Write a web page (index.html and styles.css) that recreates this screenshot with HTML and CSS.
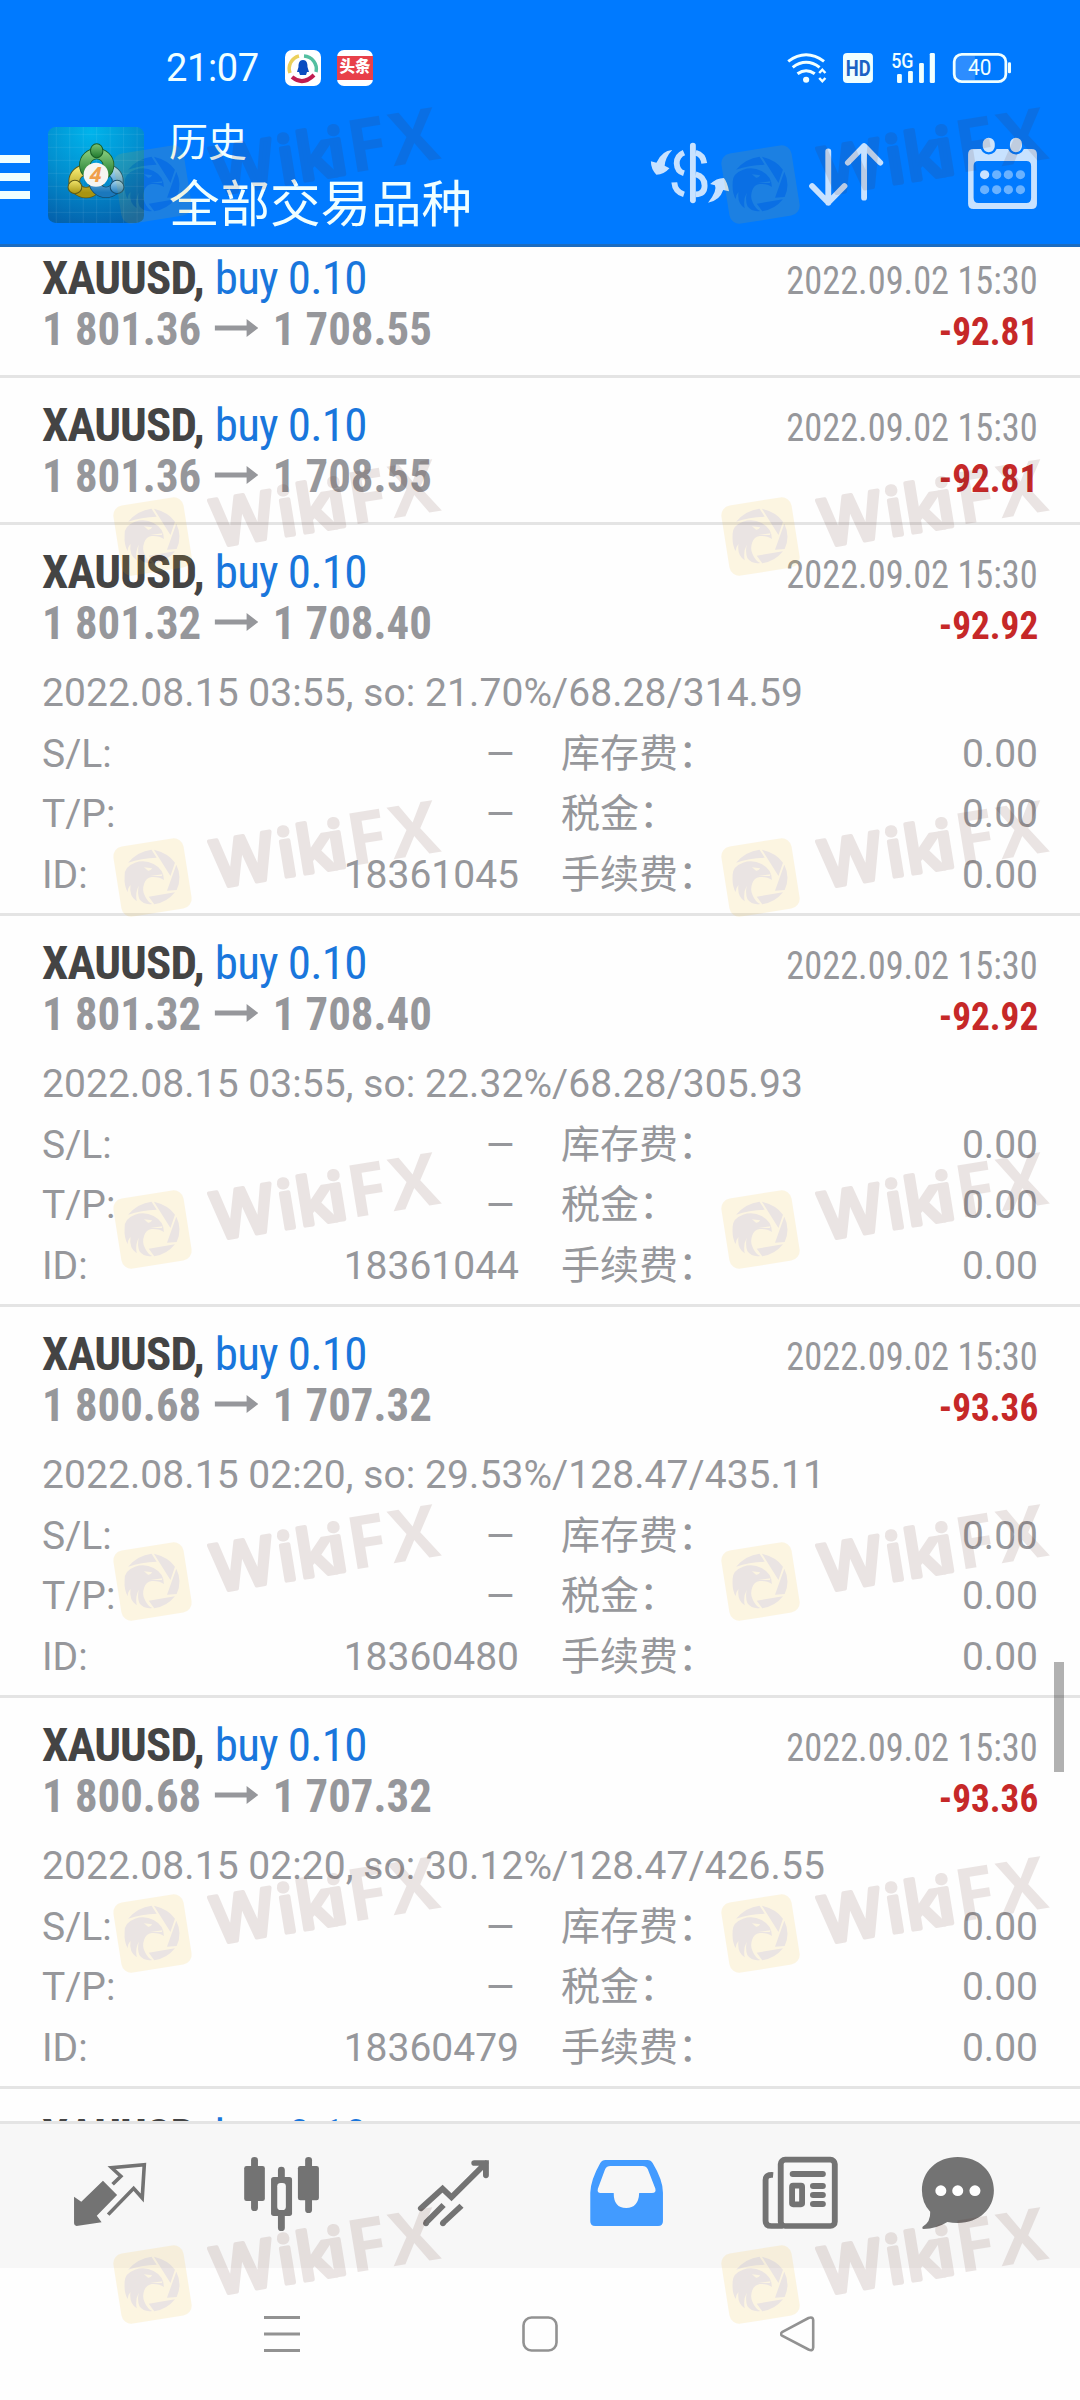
FILE: index.html
```html
<!DOCTYPE html>
<html lang="zh-CN">
<head>
<meta charset="utf-8">
<title>历史</title>
<link rel="stylesheet" href="styles.css">
</head>
<body>
<svg class="defs" width="0" height="0">
  <symbol id="mark" viewBox="0 0 350 125">
    <rect x="13" y="45" width="71" height="71" rx="10" fill="#f0b20f" transform="rotate(-9 48.5 80.5)"/>
    <g transform="matrix(.34435 0 0 .33333 -104 -157)" fill="#572319">
      <path d="M372 668Q400 634 440 629L455 653Q410 655 372 668ZM447 629Q490 640 508 668L495 708ZM512 674Q530 712 513 750L485 752ZM508 757Q485 787 448 793L432 770Z"/>
      <path d="M362 708Q360 680 392 668Q420 658 446 672Q476 688 476 720Q462 709 440 711Q424 714 419 730Q412 750 420 766Q428 786 442 792Q418 796 405 778Q398 760 403 737Q392 757 397 784Q374 768 379 735Q370 745 371 757Q360 738 362 708Z"/>
      <path d="M418 682L442 685Q438 693 430 692ZM436 708L472 703L470 708Z" fill="#f0b20f"/>
    </g>
    <g transform="translate(112 91) rotate(-9.2)" fill="#572319" stroke="#572319" stroke-linejoin="round">
      <text class="mark-round" stroke-width="4" x="0 66 85 117">Wiki</text>
      <text class="mark-flat" stroke-width="0" x="137 180">FX</text>
    </g>
  </symbol>
  <symbol id="arrow" viewBox="0 0 43 18" preserveAspectRatio="none"><path d="M0 6.4H31.5V0L43 9L31.5 18V11.6H0Z" fill="currentColor"/></symbol>
</svg>

<header class="header">
  <div class="status">
    <span class="time">21:07</span>
    <svg class="app-dot" viewBox="0 0 36 36"><rect width="36" height="36" rx="7" fill="#fff"/><path d="M5 23A13 13 0 0 1 14 6" fill="none" stroke="#ecd05a" stroke-width="3.5"/><path d="M19 6A13 13 0 0 1 31 22" fill="none" stroke="#54bfa0" stroke-width="3.5"/><path d="M7 27Q18 36 29 25" fill="none" stroke="#c01d50" stroke-width="4"/><path d="M18 10C13.500 10 13.500 15 13.500 17L12 22L14 22L15 25H21L22 22L24 22L22.500 17C22.500 15 22.500 10 18 10Z" fill="#0b4cc0"/></svg>
    <span class="toutiao"><b>头条</b></span>
    <svg class="radio" viewBox="700 -90 697 288" preserveAspectRatio="none">
      <g fill="none" stroke="#f0ffff" stroke-width="9"><path d="M721 94Q773 55 825 94M734 112Q773 82 812 112M748 131Q773 113 798 131"/></g>
      <circle cx="773" cy="149" r="9" fill="#f0ffff"/>
      <path d="M811 129L820 119L829 129M811 144L820 154L829 144" fill="none" stroke="#f0ffff" stroke-width="7"/>
      <rect x="880" y="69" width="87" height="90" rx="12" fill="#f0ffff"/>
      <text x="888" y="137" class="hd" textLength="72" lengthAdjust="spacingAndGlyphs">HD</text>
      <text x="1020" y="113" class="fiveg" textLength="65" lengthAdjust="spacingAndGlyphs">5G</text>
      <g fill="#f0ffff"><rect x="1037" y="132" width="14" height="27" rx="4"/><rect x="1069" y="123" width="14" height="36" rx="4"/><rect x="1101" y="99" width="14" height="60" rx="4"/><rect x="1132" y="69" width="15" height="90" rx="4"/><rect x="1359" y="97" width="9" height="33" rx="4"/></g>
      <path d="M1225 77H1263V151H1225Q1204 151 1204 128V100Q1204 77 1225 77Z" fill="#2d8dff"/>
      <rect x="1203" y="73" width="150" height="82" rx="22" fill="none" stroke="#f0ffff" stroke-width="8"/>
      <text x="1243" y="136" class="pct" textLength="68" lengthAdjust="spacingAndGlyphs">40</text>
    </svg>
  </div>
  <div class="toolbar">
    <div class="burger"><i></i><i></i><i></i></div>
    <svg class="logo" viewBox="139 291 278 288" preserveAspectRatio="none">
      <defs>
        <radialGradient id="bg" cx=".45" cy=".05" r="1"><stop offset="0" stop-color="#00b4ec"/><stop offset=".5" stop-color="#0290d0"/><stop offset="1" stop-color="#0462ac"/></radialGradient>
        <linearGradient id="gr" x2="0" y2="1"><stop offset="0" stop-color="#7cc576"/><stop offset="1" stop-color="#207a2e"/></linearGradient>
        <linearGradient id="ye" x2="0" y2="1"><stop offset="0" stop-color="#f0e36a"/><stop offset="1" stop-color="#a89410"/></linearGradient>
        <linearGradient id="bl" x2="0" y2="1"><stop offset="0" stop-color="#a4d6f0"/><stop offset="1" stop-color="#1b78bc"/></linearGradient>
      </defs>
      <rect x="139" y="291" width="278" height="288" rx="22" fill="url(#bg)"/>
      <path d="M139 313H417M139 352H417M139 391H417M139 430H417M139 469H417M139 508H417M139 547H417M163 291V579M202 291V579M241 291V579M280 291V579M319 291V579M358 291V579M397 291V579" stroke="#fff" stroke-opacity=".12" fill="none" stroke-width="2"/>
      <g fill="none" stroke-width="29"><circle cx="249" cy="454" r="34" stroke="#5c5a18" stroke-width="34"/><circle cx="249" cy="454" r="34" stroke="url(#ye)"/><circle cx="307" cy="453" r="34" stroke="#134e72" stroke-width="34"/><circle cx="307" cy="453" r="34" stroke="url(#bl)"/><circle cx="280" cy="405" r="34" stroke="#185d24" stroke-width="34"/><circle cx="280" cy="405" r="34" stroke="url(#gr)"/></g>
      <ellipse cx="280" cy="362" rx="18" ry="21" fill="url(#gr)" stroke="#185d24" stroke-width="3"/><circle cx="217" cy="471" r="20" fill="url(#ye)" stroke="#5c5a18" stroke-width="3"/><circle cx="339" cy="471" r="20" fill="url(#bl)" stroke="#134e72" stroke-width="3"/>
      <circle cx="278" cy="434" r="36" fill="#f6f5f2"/>
      <text x="260" y="456" class="four">4</text>
    </svg>
    <div class="titles"><div class="small">历史</div><div class="big">全部交易品种</div></div>
    <svg class="action" viewBox="290.400 198 290.400 444" preserveAspectRatio="none">
      <g fill="none" stroke="#c8e2ff" stroke-width="17"><path d="M444 347V511" stroke-linecap="round"/><path d="M452 368Q474 374 477 400M452 433Q478 440 478 467Q478 492 452 493"/><path d="M418 368Q397 377 397 400Q398 424 418 430M390 457Q392 485 418 493"/></g>
      <path d="M384 360Q354 362 338 398L322 394Q322 418 338 434Q360 434 376 415L362 407Q364 382 384 360ZM488 518Q516 482 508 466L494 462Q512 444 534 444Q544 456 549 484L532 480Q522 512 488 518Z" fill="#c8e2ff"/>
    </svg>
    <svg class="action gap-a" viewBox="740.400 198 290.400 444" preserveAspectRatio="none"><path d="M837 364V518M790 468L837 518L884 468M941 503V348M894 398L941 348L988 398" fill="none" stroke="#c8e2ff" stroke-width="17" stroke-linecap="round" stroke-linejoin="round"/></svg>
    <svg class="action gap-b" viewBox="1205 198 290.400 444" preserveAspectRatio="none">
      <path fill-rule="evenodd" d="M1259 357H1427Q1443 357 1443 373V521Q1443 537 1427 537H1259Q1243 537 1243 521V373Q1243 357 1259 357ZM1273 393Q1259 393 1259 408V503Q1259 519 1273 519H1412Q1426 519 1426 503V408Q1426 393 1412 393Z" fill="#c8e2ff"/>
      <g fill="#cfe4fa" stroke="#007aff" stroke-width="7"><rect x="1282" y="320" width="42" height="50" rx="21"/><rect x="1361" y="320" width="42" height="50" rx="21"/></g>
      <g fill="#6ab2ff"><circle cx="1291" cy="434" r="13.500" fill="#c8e2ff"/><circle cx="1326" cy="434" r="13.500"/><circle cx="1360" cy="434" r="13.500"/><circle cx="1395" cy="434" r="13.500"/><circle cx="1291" cy="479" r="13.500"/><circle cx="1326" cy="479" r="13.500"/><circle cx="1360" cy="479" r="13.500"/><circle cx="1395" cy="479" r="13.500"/></g>
    </svg>
  </div>
</header>

<main class="list">
  <section class="deal first">
    <div class="row"><div class="name"><b>XAUUSD,</b> <span>buy 0.10</span></div><div class="date">2022.09.02 15:30</div></div>
    <div class="row"><div class="price">1 801.36<svg class="arr"><use href="#arrow"/></svg>1 708.55</div><div class="profit">-92.81</div></div>
  </section>
  <section class="deal">
    <div class="row"><div class="name"><b>XAUUSD,</b> <span>buy 0.10</span></div><div class="date">2022.09.02 15:30</div></div>
    <div class="row"><div class="price">1 801.36<svg class="arr"><use href="#arrow"/></svg>1 708.55</div><div class="profit">-92.81</div></div>
  </section>
  <section class="deal open">
    <div class="row"><div class="name"><b>XAUUSD,</b> <span>buy 0.10</span></div><div class="date">2022.09.02 15:30</div></div>
    <div class="row"><div class="price">1 801.32<svg class="arr"><use href="#arrow"/></svg>1 708.40</div><div class="profit">-92.92</div></div>
    <div class="note">2022.08.15 03:55, so: 21.70%/68.28/314.59</div>
    <div class="facts">
      <div><span>S/L:</span><span class="dash">–</span></div><div><span>库存费：</span><span>0.00</span></div>
      <div><span>T/P:</span><span class="dash">–</span></div><div><span>税金：</span><span>0.00</span></div>
      <div><span>ID:</span><span>18361045</span></div><div><span>手续费：</span><span>0.00</span></div>
    </div>
  </section>
  <section class="deal open">
    <div class="row"><div class="name"><b>XAUUSD,</b> <span>buy 0.10</span></div><div class="date">2022.09.02 15:30</div></div>
    <div class="row"><div class="price">1 801.32<svg class="arr"><use href="#arrow"/></svg>1 708.40</div><div class="profit">-92.92</div></div>
    <div class="note">2022.08.15 03:55, so: 22.32%/68.28/305.93</div>
    <div class="facts">
      <div><span>S/L:</span><span class="dash">–</span></div><div><span>库存费：</span><span>0.00</span></div>
      <div><span>T/P:</span><span class="dash">–</span></div><div><span>税金：</span><span>0.00</span></div>
      <div><span>ID:</span><span>18361044</span></div><div><span>手续费：</span><span>0.00</span></div>
    </div>
  </section>
  <section class="deal open">
    <div class="row"><div class="name"><b>XAUUSD,</b> <span>buy 0.10</span></div><div class="date">2022.09.02 15:30</div></div>
    <div class="row"><div class="price">1 800.68<svg class="arr"><use href="#arrow"/></svg>1 707.32</div><div class="profit">-93.36</div></div>
    <div class="note">2022.08.15 02:20, so: 29.53%/128.47/435.11</div>
    <div class="facts">
      <div><span>S/L:</span><span class="dash">–</span></div><div><span>库存费：</span><span>0.00</span></div>
      <div><span>T/P:</span><span class="dash">–</span></div><div><span>税金：</span><span>0.00</span></div>
      <div><span>ID:</span><span>18360480</span></div><div><span>手续费：</span><span>0.00</span></div>
    </div>
  </section>
  <section class="deal open">
    <div class="row"><div class="name"><b>XAUUSD,</b> <span>buy 0.10</span></div><div class="date">2022.09.02 15:30</div></div>
    <div class="row"><div class="price">1 800.68<svg class="arr"><use href="#arrow"/></svg>1 707.32</div><div class="profit">-93.36</div></div>
    <div class="note">2022.08.15 02:20, so: 30.12%/128.47/426.55</div>
    <div class="facts">
      <div><span>S/L:</span><span class="dash">–</span></div><div><span>库存费：</span><span>0.00</span></div>
      <div><span>T/P:</span><span class="dash">–</span></div><div><span>税金：</span><span>0.00</span></div>
      <div><span>ID:</span><span>18360479</span></div><div><span>手续费：</span><span>0.00</span></div>
    </div>
  </section>
  <section class="deal">
    <div class="row"><div class="name"><b>XAUUSD,</b> <span>buy 0.10</span></div></div>
  </section>
</main>

<nav class="tabs">
  <svg viewBox="0 132 569.100 432" preserveAspectRatio="none"><path d="M215 350L236 365L299 302L340 345L281 407L295 427L222 438Q215 437 215 430Z" fill="#737373"/><path d="M327 313L351 289L324 263L419 254L413 354L388 325L314 404" fill="none" stroke="#737373" stroke-width="10.500" stroke-linejoin="miter" stroke-linecap="butt"/></svg>
  <svg viewBox="569.100 132 499.400 432" preserveAspectRatio="none"><g fill="#737373"><rect x="729" y="231" width="20" height="162" rx="10"/><rect x="709" y="258" width="60" height="105" rx="7"/><rect x="886" y="231" width="20" height="168" rx="10"/><rect x="865" y="258" width="61" height="103" rx="7"/><rect x="807" y="260" width="20" height="193" rx="10"/><rect x="787" y="291" width="61" height="117" rx="8"/></g><rect x="805" y="309" width="25" height="81" rx="10" fill="#f7f7f7"/></svg>
  <svg viewBox="1068.500 132 499.500 432" preserveAspectRatio="none"><g fill="none" stroke="#737373" stroke-width="17"><path d="M1222 385L1285 326L1311 352L1411 249M1377 249H1411V286" stroke-linecap="round"/><path d="M1288 375L1236 429M1340 377L1286 429"/></g><circle cx="1237" cy="430" r="8.500" fill="#737373"/><circle cx="1286" cy="430" r="8.500" fill="#737373"/></svg>
  <svg viewBox="0 132 502.300 432" preserveAspectRatio="none"><path fill-rule="evenodd" d="M190 240H312Q322 240 327 249Q357 300 357 338V424Q357 438 343 438H160Q146 438 146 424V338Q147 300 175 249Q180 240 190 240ZM204 258Q194 258 189 268L168 326Q165 339 176 339H214Q214 384 250 384Q286 384 288 339H325Q338 339 335 326L313 268Q308 258 298 258Z" fill="#429bff"/></svg>
  <svg viewBox="502.300 132 482.100 432" preserveAspectRatio="none"><g fill="none" stroke="#737373" stroke-width="17"><rect x="699" y="239" width="157" height="199" rx="13"/><path d="M677 285Q655 283 655 300V422Q655 438 672 438H705"/><rect x="732" y="317" width="29" height="56" rx="3"/></g><g fill="#737373"><rect x="725" y="273" width="105" height="18" rx="9"/><rect x="784" y="309" width="46" height="18" rx="9"/><rect x="784" y="336" width="46" height="18" rx="9"/><rect x="784" y="363" width="46" height="18" rx="9"/></g></svg>
  <svg viewBox="984.400 132 583.600 432" preserveAspectRatio="none"><path d="M1213 231C1275 231 1318 275 1318 331S1275 429 1213 429Q1197 429 1183 426Q1152 446 1113 447Q1108 445 1111 440Q1135 425 1133 395Q1109 370 1109 331C1109 275 1152 231 1213 231Z" fill="#737373"/><g fill="#fff"><circle cx="1164" cy="332" r="16"/><circle cx="1213" cy="332" r="16"/><circle cx="1263" cy="332" r="16"/></g></svg>
</nav>
<div class="system">
  <svg viewBox="0 0 36 36"><path d="M0 1.500H36M0 18H36M0 34.500H36" stroke="#929292" stroke-width="3"/></svg>
  <svg viewBox="0 0 36 36"><rect x="1.500" y="1.500" width="33" height="33" rx="8" fill="none" stroke="#929292" stroke-width="2.600"/></svg>
  <svg viewBox="0 0 36 36"><path d="M2.500 15.800L28.500 2Q33 .5 33.200 4V31.500Q33 35.500 28.500 33.500L2.500 20Q-.5 18 2.500 15.800Z" fill="none" stroke="#929292" stroke-width="2.600"/></svg>
</div>

<div class="scroll"></div>
<div class="marks">
  <svg class="mk" style="top:104px"><use href="#mark"/></svg><svg class="mk right" style="top:104px"><use href="#mark"/></svg>
  <svg class="mk" style="top:456px"><use href="#mark"/></svg><svg class="mk right" style="top:456px"><use href="#mark"/></svg>
  <svg class="mk" style="top:797px"><use href="#mark"/></svg><svg class="mk right" style="top:797px"><use href="#mark"/></svg>
  <svg class="mk" style="top:1149px"><use href="#mark"/></svg><svg class="mk right" style="top:1149px"><use href="#mark"/></svg>
  <svg class="mk" style="top:1501px"><use href="#mark"/></svg><svg class="mk right" style="top:1501px"><use href="#mark"/></svg>
  <svg class="mk" style="top:1853px"><use href="#mark"/></svg><svg class="mk right" style="top:1853px"><use href="#mark"/></svg>
  <svg class="mk" style="top:2204px"><use href="#mark"/></svg><svg class="mk right" style="top:2204px"><use href="#mark"/></svg>
</div>
</body>
</html>
```
FILE: styles.css
```css
* { box-sizing: border-box; }
body {
  position: relative;
  display: flex;
  flex-direction: column;
  width: 1080px;
  height: 2400px;
  margin: 0;
  overflow: hidden;
  background: #fefefe;
  color: #96979b;
  font-family: Roboto, "Noto Sans CJK SC", sans-serif;
}
svg { display: block; flex: none; }
.defs { position: absolute; }

.header { flex: none; height: 247px; background: #007aff; border-bottom: 3px solid #1c6cc0; color: #f0ffff; }
.status { display: flex; align-items: center; height: 96px; padding-left: 166px; }
.time { width: 119px; margin-top: 40px; font-size: 38px; line-height: 46px; letter-spacing: -.4px; }
.app-dot { width: 36px; height: 36px; margin-top: 40px; }
.toutiao { display: flex; align-items: center; width: 36px; height: 36px; margin: 40px 0 0 16px; border-radius: 7px; background: #fff; }
.toutiao b { width: 36px; height: 24px; background: #e8404a; color: #fff; font-size: 15.500px; line-height: 23px; text-align: center; font-weight: 900; }
.radio { width: 240px; height: 96px; margin-left: auto; margin-right: 59px; }
.hd { font: 700 68px Roboto; fill: #1a62c4; }
.fiveg { font: 500 58px Roboto; fill: #f0ffff; }
.pct { font: 400 64px Roboto; fill: #f0ffff; }

.toolbar { display: flex; height: 148px; }
.burger { display: flex; flex-direction: column; gap: 10px; width: 48px; padding-top: 59px; }
.burger i { width: 30px; height: 8px; background: #f0ffff; }
.logo { width: 96px; height: 96px; margin-top: 31px; }
.four { font: italic 700 62px "Noto Sans"; fill: #f0a04c; }
.titles { flex: 1; padding-left: 25px; }
.small { margin-top: 22px; font-size: 39px; line-height: 50px; }
.big { margin-top: 7px; font-size: 50.500px; line-height: 60px; }
.action { width: 100px; height: 148px; }
.gap-a { margin-left: 55px; }
.gap-b { margin-left: 60px; margin-right: 25px; }

.list { flex: none; height: 1874px; overflow: hidden; }
.deal { height: 147px; padding: 22px 42px 0; border-bottom: 3px solid #e4e4e4; }
.deal.first { margin-top: -16px; }
.deal.open { height: 391px; }
.row { display: flex; justify-content: space-between; align-items: baseline; height: 50px; margin-bottom: 1px; font-family: "Roboto Condensed", Roboto, sans-serif; font-stretch: 75%; font-size: 47px; line-height: 50px; white-space: nowrap; }
.name b { color: #444; letter-spacing: -.9px; }
.name span { color: #1976dc; letter-spacing: -.8px; }
.date { font-size: 39px; transform: scaleX(.932); transform-origin: right; }
.price { font-weight: 700; transform: scaleX(.953); transform-origin: left; }
.arr { display: inline-block; width: 46px; height: 18px; margin: 0 15px 0 14px; vertical-align: 8px; }
.profit { font-size: 39px; font-weight: 700; color: #c62828; transform: scaleX(.955); transform-origin: right; }
.note { margin-top: 15px; font-size: 39px; line-height: 60.500px; letter-spacing: .07px; white-space: nowrap; }
.facts { display: grid; grid-template-columns: 477px 477px; column-gap: 42px; grid-auto-rows: 60.500px; font-size: 39px; line-height: 60.500px; }
.facts div { display: flex; justify-content: space-between; white-space: nowrap; }
.dash { margin-right: 2px; transform: scaleX(1.24); transform-origin: right; }

.tabs { flex: none; display: grid; grid-template-columns: 196px 172px 172px 173px 166px 201px; height: 147px; border-top: 3px solid #e4e4e4; background: #f7f7f7; }
.tabs svg { width: 100%; height: 144px; }
.system { flex: none; display: flex; justify-content: center; gap: 222px; height: 132px; padding-top: 48px; }
.system svg { width: 36px; height: 36px; }

.scroll { position: absolute; left: 1054px; top: 1662px; width: 10px; height: 110px; background: rgba(0, 0, 0, .3); }
.marks { position: absolute; inset: 0; opacity: .115; pointer-events: none; }
.mk { position: absolute; left: 104px; width: 350px; height: 125px; }
.mk.right { left: 712px; }
.mark-round { font: 600 66px "Open Sans", sans-serif; }
.mark-flat { font: 700 73px "Open Sans", sans-serif; }
```
